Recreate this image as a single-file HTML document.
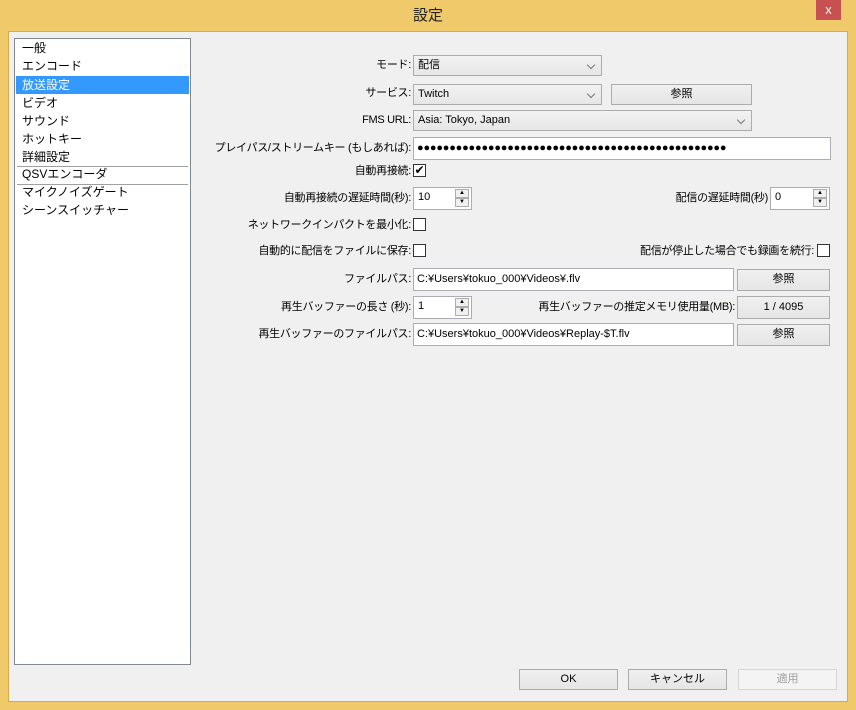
<!DOCTYPE html>
<html><head><meta charset="utf-8"><style>
*{margin:0;padding:0;box-sizing:border-box}
body{width:856px;height:710px;background:#f0c96a;font-family:"Liberation Sans","Noto Sans CJK JP",sans-serif;font-size:12px;color:#000;position:relative;overflow:hidden}
.a{position:absolute}
#win{left:8px;top:31px;width:840px;height:671px;background:#f0f0f0;border:1px solid #d9a94a}
.title{left:0;top:0;width:856px;height:31px;text-align:center;line-height:32px;font-size:15px;color:#222}
.close{left:816px;top:0;width:25px;height:20px;background:#c75050;color:#fff;text-align:center;line-height:19px;font-size:13px}
.list{left:14px;top:38px;width:177px;height:627px;background:#fff;border:1px solid #828790}
.it{position:absolute;left:1px;width:173px;height:18px;line-height:18px;padding-left:6px}
.sel{background:#3399ff;color:#fff}
.sep{position:absolute;left:2px;width:171px;height:1px;background:#a0a0a0}
.lab{text-align:right;line-height:20px;white-space:nowrap;font-size:11px;letter-spacing:-0.3px}
.cb{background:linear-gradient(#f2f2f2,#e6e6e6);border:1px solid #acacac;padding-left:4px;line-height:19px;font-size:11px}
.cb::after{content:"";position:absolute;right:7px;top:6px;width:5px;height:5px;border-right:1.5px solid #777;border-bottom:1.5px solid #777;transform:rotate(45deg)}
.btn{background:linear-gradient(#f0f0f0,#e5e5e5);border:1px solid #acacac;text-align:center;line-height:19px;font-size:11px}
.in{background:#fff;border:1px solid #abadb3;padding-left:3px;line-height:19px;overflow:hidden;white-space:nowrap;font-size:11px}
.chk{width:13px;height:13px;background:#fff;border:1px solid #333}
.sp{background:#fff;border:1px solid #abadb3;padding-left:4px;line-height:18px;font-size:11px}
.sp b{position:absolute;right:2px;width:14px;height:9px;background:#f0f0f0;border:1px solid #adadad;font-size:6px;line-height:7px;text-align:center;font-weight:normal}
</style></head><body>
<div class="a title">設定</div>
<div class="a close">x</div>
<div class="a" id="win"></div>
<div class="a list">
<div class="it" style="top:0">一般</div>
<div class="it" style="top:18px">エンコード</div>
<div class="it sel" style="top:37px">放送設定</div>
<div class="it" style="top:55px">ビデオ</div>
<div class="it" style="top:73px">サウンド</div>
<div class="it" style="top:91px">ホットキー</div>
<div class="it" style="top:109px">詳細設定</div>
<div class="sep" style="top:127px"></div>
<div class="it" style="top:126px">QSVエンコーダ</div>
<div class="sep" style="top:145px"></div>
<div class="it" style="top:144px">マイクノイズゲート</div>
<div class="it" style="top:162px">シーンスイッチャー</div>
</div>

<div class="a lab" style="right:445px;top:55px">モード:</div>
<div class="a cb" style="left:413px;top:55px;width:189px;height:21px">配信</div>
<div class="a lab" style="right:445px;top:83px">サービス:</div>
<div class="a cb" style="left:413px;top:84px;width:189px;height:21px">Twitch</div>
<div class="a btn" style="left:611px;top:84px;width:141px;height:21px">参照</div>
<div class="a lab" style="right:445px;top:110px">FMS URL:</div>
<div class="a cb" style="left:413px;top:110px;width:339px;height:21px">Asia: Tokyo, Japan</div>
<div class="a lab" style="right:445px;top:138px">プレイパス/ストリームキー (もしあれば):</div>
<div class="a in" style="left:413px;top:137px;width:418px;height:23px;line-height:21px;font-size:11px;letter-spacing:-0.2px">●●●●●●●●●●●●●●●●●●●●●●●●●●●●●●●●●●●●●●●●●●●●●●●●</div>
<div class="a lab" style="right:445px;top:161px">自動再接続:</div>
<div class="a chk" style="left:413px;top:164px;font-size:12px;line-height:10px;text-align:center">✔</div>
<div class="a lab" style="right:445px;top:188px">自動再接続の遅延時間(秒):</div>
<div class="a sp" style="left:413px;top:187px;width:59px;height:23px">10<b style="top:1px">▲</b><b style="top:10px">▼</b></div>
<div class="a lab" style="right:88px;top:188px">配信の遅延時間(秒)</div>
<div class="a sp" style="left:770px;top:187px;width:60px;height:23px">0<b style="top:1px">▲</b><b style="top:10px">▼</b></div>
<div class="a lab" style="right:445px;top:215px">ネットワークインパクトを最小化:</div>
<div class="a chk" style="left:413px;top:218px"></div>
<div class="a lab" style="right:445px;top:241px">自動的に配信をファイルに保存:</div>
<div class="a chk" style="left:413px;top:244px"></div>
<div class="a lab" style="right:42px;top:241px">配信が停止した場合でも録画を続行:</div>
<div class="a chk" style="left:817px;top:244px"></div>
<div class="a lab" style="right:445px;top:269px">ファイルパス:</div>
<div class="a in" style="left:413px;top:268px;width:321px;height:23px;line-height:20px">C:¥Users¥tokuo_000¥Videos¥.flv</div>
<div class="a btn" style="left:737px;top:269px;width:93px;height:22px">参照</div>
<div class="a lab" style="right:445px;top:297px">再生バッファーの長さ (秒):</div>
<div class="a sp" style="left:413px;top:296px;width:59px;height:23px">1<b style="top:1px">▲</b><b style="top:10px">▼</b></div>
<div class="a lab" style="right:121px;top:297px">再生バッファーの推定メモリ使用量(MB):</div>
<div class="a btn" style="left:737px;top:296px;width:93px;height:23px;line-height:21px">1 / 4095</div>
<div class="a lab" style="right:445px;top:324px">再生バッファーのファイルパス:</div>
<div class="a in" style="left:413px;top:323px;width:321px;height:23px;line-height:20px">C:¥Users¥tokuo_000¥Videos¥Replay-$T.flv</div>
<div class="a btn" style="left:737px;top:324px;width:93px;height:22px">参照</div>

<div class="a btn" style="left:519px;top:669px;width:99px;height:21px">OK</div>
<div class="a btn" style="left:628px;top:669px;width:99px;height:21px">キャンセル</div>
<div class="a btn" style="left:738px;top:669px;width:99px;height:21px;color:#a0a0a0;border-color:#d5d5d5;background:#f4f4f4">適用</div>
</body></html>
